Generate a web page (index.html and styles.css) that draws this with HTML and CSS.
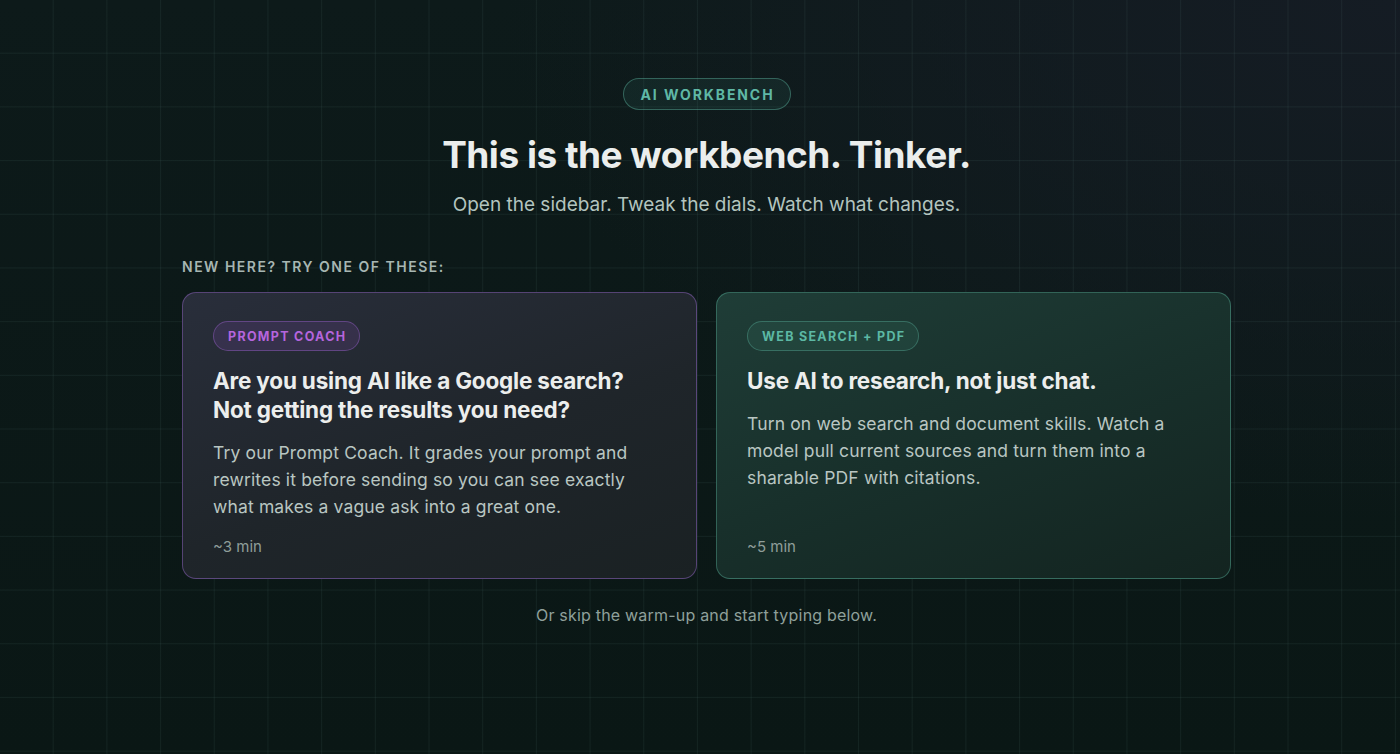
FILE: index.html
```html
<!DOCTYPE html>
<html lang="en">
<head>
<meta charset="utf-8">
<title>AI Workbench</title>
<link rel="stylesheet" href="styles.css">
</head>
<body>
<main class="page">
  <section class="hero">
    <span class="eyebrow">AI WORKBENCH</span>
    <h1 class="title">This is the workbench. Tinker.</h1>
    <p class="subtitle">Open the sidebar. Tweak the dials. Watch what changes.</p>
  </section>
  <section class="starters">
    <h2 class="starters-label">NEW HERE? TRY ONE OF THESE:</h2>
    <div class="cards">
      <article class="card card-purple">
        <span class="tag tag-purple">PROMPT COACH</span>
        <h3 class="card-title">Are you using AI like a Google search?<br>Not getting the results you need?</h3>
        <p class="card-body">Try our Prompt Coach. It grades your prompt and rewrites it before sending so you can see exactly what makes a vague ask into a great one.</p>
        <span class="card-meta">~3 min</span>
      </article>
      <article class="card card-teal">
        <span class="tag tag-teal">WEB SEARCH + PDF</span>
        <h3 class="card-title">Use AI to research, not just chat.</h3>
        <p class="card-body">Turn on web search and document skills. Watch a model pull current sources and turn them into a sharable PDF with citations.</p>
        <span class="card-meta">~5 min</span>
      </article>
    </div>
    <p class="skip">Or skip the warm-up and start typing below.</p>
  </section>
</main>
</body>
</html>
```

FILE: styles.css
```css
* { box-sizing: border-box; }
html, body { margin: 0; padding: 0; height: 100%; }
body {
  font-family: "Inter", "Noto Sans", sans-serif;
  color: #e8ecea;
  background-color: #0a1715;
  background-image:
    linear-gradient(to right, transparent 53px, rgba(120, 170, 160, 0.085) 53px, rgba(120, 170, 160, 0.085) 54px),
    linear-gradient(to bottom, transparent 53px, rgba(120, 170, 160, 0.085) 53px, rgba(120, 170, 160, 0.085) 54px),
    radial-gradient(ellipse 900px 520px at 100% 0%, #151c24 0%, rgba(21, 28, 36, 0.6) 45%, rgba(10, 23, 21, 0) 100%),
    linear-gradient(180deg, #0d1a1a 0%, #0a1715 100%);
  background-size: 53.7px 53.7px, 53.7px 53.7px, 100% 100%, 100% 100%;
  overflow: hidden;
}
.page {
  min-height: 754px;
  padding: 78px 0 0 13px;
  display: flex;
  flex-direction: column;
  align-items: center;
}
.hero {
  display: flex;
  flex-direction: column;
  align-items: center;
}
.eyebrow {
  display: inline-flex;
  align-items: center;
  height: 32px;
  padding: 0 15px 0 17px;
  border: 1px solid rgba(95, 185, 165, 0.42);
  border-radius: 16px;
  background: rgba(60, 140, 125, 0.12);
  color: #5fb8a6;
  font-weight: 700;
  font-size: 14px;
  letter-spacing: 1.9px;
}
.title {
  margin: 22px 0 0;
  font-size: 37px;
  line-height: 46px;
  font-weight: 700;
  letter-spacing: -0.5px;
  color: #ebeeed;
}
.subtitle {
  margin: 13px 0 0;
  font-size: 19px;
  line-height: 28px;
  color: #b3c4bf;
}
.starters {
  width: 1049px;
  margin-top: 38px;
  display: flex;
  flex-direction: column;
}
.starters-label {
  margin: 0;
  font-size: 14px;
  line-height: 20px;
  font-weight: 600;
  letter-spacing: 1.5px;
  color: #a7b6b2;
}
.cards {
  margin-top: 15px;
  display: grid;
  grid-template-columns: 1fr 1fr;
  gap: 19px;
}
.card {
  height: 287px;
  padding: 28px 30px 21px;
  border-radius: 14px;
  display: flex;
  flex-direction: column;
  align-items: flex-start;
}
.card-purple {
  border: 1px solid rgba(125, 90, 170, 0.6);
  background: linear-gradient(160deg, #292e3b 0%, #1f252a 55%, #1a2123 100%);
}
.card-teal {
  border: 1px solid rgba(80, 160, 140, 0.5);
  background: linear-gradient(160deg, #1f3d37 0%, #18302b 50%, #132420 100%);
}
.tag {
  display: inline-flex;
  align-items: center;
  height: 30px;
  padding: 0 13px 0 14px;
  border-radius: 15px;
  font-weight: 700;
  font-size: 12.5px;
  letter-spacing: 1.3px;
}
.tag-purple {
  color: #b565dd;
  background: rgba(140, 80, 190, 0.16);
  border: 1px solid rgba(150, 95, 200, 0.45);
}
.tag-teal {
  color: #5cb8a4;
  background: rgba(70, 160, 135, 0.12);
  border: 1px solid rgba(85, 170, 150, 0.42);
}
.card-title {
  margin: 15px 0 0;
  font-size: 22.5px;
  line-height: 29px;
  font-weight: 700;
  letter-spacing: -0.2px;
  color: #eceeed;
}
.card-body {
  margin: 15px 0 0;
  font-size: 17.5px;
  line-height: 27px;
  letter-spacing: 0.15px;
  color: #b9c6c2;
}
.card-meta {
  margin-top: auto;
  font-size: 15px;
  line-height: 20px;
  color: #8f9e9a;
}
.skip {
  margin: 25px 0 0;
  text-align: center;
  font-size: 16px;
  line-height: 22px;
  color: #8fa09b;
  letter-spacing: 0.2px;
}
```
